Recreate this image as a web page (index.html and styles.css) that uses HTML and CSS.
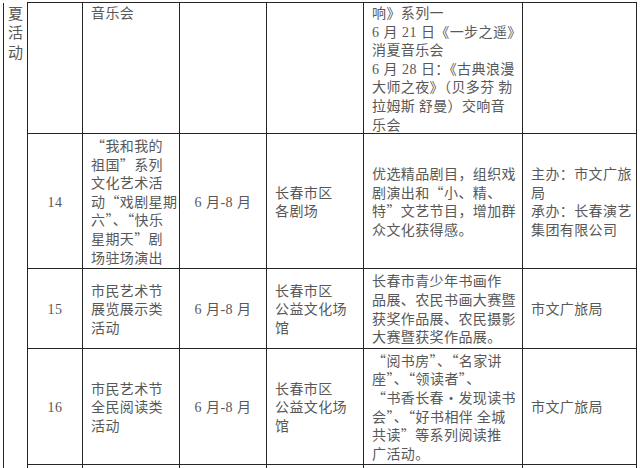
FILE: index.html
```html
<!DOCTYPE html>
<html lang="zh-CN">
<head>
<meta charset="utf-8">
<title>活动安排表</title>
<link rel="stylesheet" href="styles.css">
</head>
<body>
<table class="grid">
  <colgroup>
    <col class="c-side">
    <col class="c-num">
    <col class="c-name">
    <col class="c-date">
    <col class="c-venue">
    <col class="c-content">
    <col class="c-org">
  </colgroup>
  <tr class="r1">
    <td class="side" rowspan="5">夏<br>活<br>动</td>
    <td class="num"></td>
    <td class="txt top">音乐会</td>
    <td class="date"></td>
    <td class="txt"></td>
    <td class="txt top">响》系列一<br><span class="lat">6 </span>月<span class="lat"> 21 </span>日《一步之遥》<br>消夏音乐会<br><span class="lat">6 </span>月<span class="lat"> 28 </span>日：《古典浪漫<br>大师之夜》（贝多芬 勃<br>拉姆斯 舒曼）交响音<br>乐会</td>
    <td class="txt"></td>
  </tr>
  <tr class="r14">
    <td class="num"><span class="lat">14</span></td>
    <td class="txt">“我和我的<br>祖国”系列<br>文化艺术活<br>动“戏剧星期<br>六”、“快乐<br>星期天”剧<br>场驻场演出</td>
    <td class="date"><span class="lat">6 </span>月<span class="lat">-8 </span>月</td>
    <td class="txt">长春市区<br>各剧场</td>
    <td class="txt">优选精品剧目，组织戏<br>剧演出和“小、精、<br>特”文艺节目，增加群<br>众文化获得感。</td>
    <td class="txt">主办：市文广旅<br>局<br>承办：长春演艺<br>集团有限公司</td>
  </tr>
  <tr class="r15">
    <td class="num"><span class="lat">15</span></td>
    <td class="txt">市民艺术节<br>展览展示类<br>活动</td>
    <td class="date"><span class="lat">6 </span>月<span class="lat">-8 </span>月</td>
    <td class="txt">长春市区<br>公益文化场<br>馆</td>
    <td class="txt">长春市青少年书画作<br>品展、农民书画大赛暨<br>获奖作品展、农民摄影<br>大赛暨获奖作品展。</td>
    <td class="txt">市文广旅局</td>
  </tr>
  <tr class="r16">
    <td class="num"><span class="lat">16</span></td>
    <td class="txt">市民艺术节<br>全民阅读类<br>活动</td>
    <td class="date"><span class="lat">6 </span>月<span class="lat">-8 </span>月</td>
    <td class="txt">长春市区<br>公益文化场<br>馆</td>
    <td class="txt">“阅书房”、“名家讲<br>座”、“领读者”、<br>“书香长春•发现读书<br>会”、“好书相伴 全城<br>共读”等系列阅读推<br>广活动。</td>
    <td class="txt">市文广旅局</td>
  </tr>
  <tr class="r17">
    <td class="num"></td>
    <td class="txt"></td>
    <td class="date"></td>
    <td class="txt"></td>
    <td class="txt"></td>
    <td class="txt"></td>
  </tr>
</table>
</body>
</html>
```

FILE: styles.css
```css
html, body {
  margin: 0;
  padding: 0;
  background: #ffffff;
  overflow: hidden;
}

body {
  font-family: "Noto Sans CJK SC", "Noto Sans", sans-serif;
  font-size: 14px;
  line-height: 18.6px;
  color: #585858;
  letter-spacing: 0.4px;
}

.grid {
  border-collapse: collapse;
  table-layout: fixed;
  width: 634px;
  margin: 2px 0 0 3px;
}

.c-side { width: 24px; }
.c-num { width: 55px; }
.c-name { width: 97px; }
.c-date { width: 87px; }
.c-venue { width: 97px; }
.c-content { width: 159px; }
.c-org { width: 114px; }

.grid td {
  border: 1px solid #262626;
  padding: 0 0 0 8px;
  vertical-align: middle;
  white-space: nowrap;
  overflow: hidden;
}

.grid td.side {
  border-top: none;
  vertical-align: top;
  text-align: center;
  padding: 0;
  font-size: 15px;
  line-height: 19.5px;
  letter-spacing: 0;
}

.grid td.num,
.grid td.date {
  text-align: center;
  padding: 0;
}

.grid td.top {
  vertical-align: top;
  padding-top: 0;
}

.lat {
  font-family: "Liberation Serif", serif;
  letter-spacing: 0.5px;
  line-height: 1;
}

.r1 { height: 130px; }
.r14 { height: 135px; }
.r15 { height: 80px; }
.r16 { height: 116px; }
.r17 { height: 30px; }
```
